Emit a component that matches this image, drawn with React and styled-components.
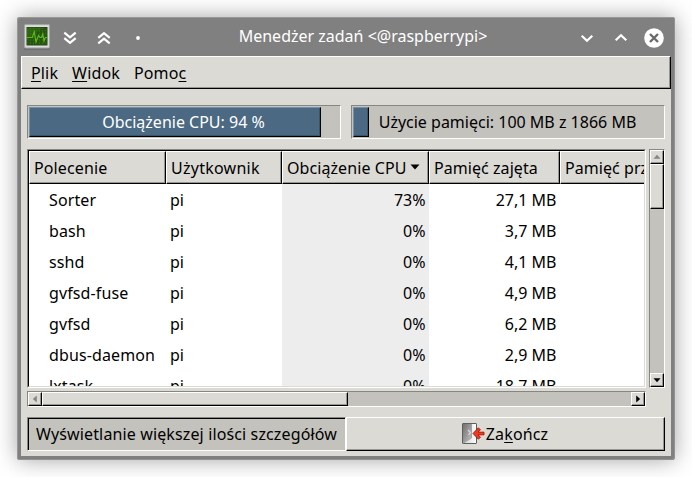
import React from "react";
import styled, { createGlobalStyle } from "styled-components";

const C = { face: "#dcdad5", trough: "#c4c2bd", blue: "#4b6983", frame: "#808080" };

const Global = createGlobalStyle`
  * { box-sizing: border-box; }
  html, body { margin: 0; padding: 0; background: #fff; overflow: hidden; }
  body { font: 16px/22px "Noto Sans", sans-serif; color: #000; white-space: nowrap; cursor: default; }
  svg { display: block; }
`;

const Page = styled.div`
  width: 692px;
  height: 477px;
  padding: 17px;
  overflow: hidden;
`;
const Window = styled.div`
  width: 658px;
  height: 443px;
  display: flex;
  flex-direction: column;
  background: ${C.frame};
  border-radius: 3px;
  padding: 0 4px 4px;
  box-shadow: inset 1px 1px 0 #989898, inset -1px -1px 0 #929292, 0 0 22px rgba(0, 0, 0, 0.36);
`;
const TitleBar = styled.header`
  height: 39px;
  flex: none;
  display: grid;
  grid-template-columns: 156px 1fr 124px;
  align-items: center;
  color: #fff;
`;
const Title = styled.div`
  text-align: center;
  padding: 0 0 2px 2px;
`;
const TitleLeft = styled.div`
  display: flex;
  align-items: center;
  padding-left: 2px;
`;
const DesktopKeys = styled.div`
  display: flex;
  align-items: center;
  gap: 20px;
  padding: 3px 0 0 12px;
`;
const PinKey = styled.div`
  padding: 2px 0 0 25px;
`;
const TitleRight = styled.div`
  display: flex;
  align-items: center;
  justify-content: flex-end;
  gap: 20px;
  padding: 3px 7px 0 0;
`;
const CloseKey = styled.div`
  margin-left: -4px;
`;
const Client = styled.main`
  flex: 1;
  min-height: 0;
  background: ${C.face};
  display: flex;
  flex-direction: column;
`;
const MenuBar = styled.nav`
  height: 33px;
  flex: none;
  display: flex;
  gap: 14px;
  align-items: center;
  padding: 0 0 0 9px;
  letter-spacing: 0.15px;
  border: solid;
  border-width: 1px;
  border-color: #fff #000 #000 #fff;
  box-shadow: inset -1px -1px 0 #969590;
`;
const Key = styled.span`
  text-decoration: underline;
  text-decoration-thickness: 1px;
  text-underline-offset: 2px;
  text-decoration-skip-ink: none;
`;
const Body = styled.div`
  padding: 16px 6px 6px;
  display: flex;
  flex-direction: column;
`;
const Meters = styled.div`
  display: grid;
  grid-template-columns: 314px 314px;
  gap: 10px;
  height: 34px;
`;
const Meter = styled.div`
  background: ${C.trough};
  border: 1px solid;
  border-color: #888680 #fff #fff #888680;
  padding: 1px;
  display: grid;
  align-items: stretch;
`;
const MeterFill = styled.div`
  grid-area: 1 / 1;
  width: ${(p) => p.$w}px;
  background: ${C.blue};
  border: 1px solid;
  border-color: #7590ae #000 #000 #7590ae;
  box-shadow: inset -1px -1px 0 #3a546b;
`;
const MeterLabel = styled.div`
  grid-area: 1 / 1;
  text-align: center;
  line-height: 30px;
  padding-right: 1px;
  color: ${(p) => (p.$light ? "#fff" : "#000")};
`;
const ListArea = styled.div`
  margin-top: 10px;
  display: grid;
  grid-template-columns: 619px 16px;
  grid-template-rows: 239px 16px;
  gap: 3px;
`;
const Table = styled.div`
  background: #fff;
  border: 1px solid;
  border-color: #888680 #fff #fff #888680;
  overflow: hidden;
`;
const TableInner = styled.div`
  height: 237px;
  border: 1px solid;
  border-color: #000 ${C.face} ${C.face} #000;
  overflow: hidden;
`;
const columns = "137px 116px 147px 131px 130px";
const HeaderRow = styled.div`
  display: grid;
  grid-template-columns: ${columns};
  height: 33px;
`;
const HeaderCell = styled.div`
  display: flex;
  align-items: center;
  gap: 4px;
  padding: 0 0 0 4px;
  letter-spacing: ${(p) => p.$track ?? 0.12}px;
  background: ${C.face};
  border: 1px solid;
  border-color: #fff #000 #000 #fff;
  box-shadow: inset -1px -1px 0 #969590;
  svg { margin-top: -2px; }
`;
const Row = styled.div`
  display: grid;
  grid-template-columns: ${columns};
  height: 31px;
  line-height: 33px;
`;
const Cell = styled.div`
  padding: 0 3.5px 0 ${(p) => (p.$name ? 20 : 4)}px;
  letter-spacing: ${(p) => (p.$name ? 0.12 : 0)}px;
  text-align: ${(p) => (p.$right ? "right" : "left")};
  background: ${(p) => (p.$sorted ? "#ededed" : "#fff")};
`;
const Scroll = styled.div`
  display: flex;
  flex-direction: ${(p) => (p.$vertical ? "column" : "row")};
  background: ${C.trough};
  border: 1px solid;
  border-color: #888680 #fff #fff #888680;
`;
const Raised = styled.div`
  background: ${C.face};
  border: 1px solid;
  border-color: #fff #000 #000 #fff;
  box-shadow: inset -1px -1px 0 #969590;
`;
const Arrow = styled(Raised)`
  width: 14px;
  height: 14px;
  flex: none;
  display: flex;
  align-items: center;
  justify-content: center;
`;
const Thumb = styled(Raised)`
  flex: 0 0 ${(p) => p.$size}px;
`;
const Spacer = styled.div`
  flex: 1;
`;
const Footer = styled.footer`
  margin-top: 10px;
  display: grid;
  grid-template-columns: 319px 319px;
  height: 33px;
`;
const PressedButton = styled.div`
  background: ${C.trough};
  border: 1px solid;
  border-color: #888680 #fff #fff #888680;
  box-shadow: inset 1px 1px 0 #000;
  line-height: 32px;
  letter-spacing: 0.13px;
  padding-left: 8px;
`;
const Button = styled(Raised)`
  display: flex;
  align-items: center;
  justify-content: center;
  gap: 1px;
  padding-right: 2px;
  line-height: 32px;
  letter-spacing: 0.15px;
`;

const MonitorIcon = () => (
  <svg width="28" height="28" viewBox="0 0 28 28">
    <rect x="1" y="2" width="26" height="25" rx="1.5" fill="#5d5d5d" opacity=".5" />
    <rect x="1.5" y="1.5" width="25" height="23.5" rx="1" fill="#d6d6d6" stroke="#a4a4a4" />
    <rect x="3" y="3.5" width="22" height="20" fill="#fff" opacity=".4" />
    <rect x="3.5" y="4" width="21" height="18.5" fill="#1d3a13" />
    <rect x="4" y="4.5" width="20" height="17.5" fill="#25560f" />
    <path d="M4 4.5H20L4 17Z" fill="#36700f" opacity=".6" />
    <path d="M4 7.5H24M4 10.5H24M4 16.5H24M4 19.5H24M7.5 5V22M10.5 5V22M16.5 5V22M19.5 5V22" stroke="#3c7d1b" strokeWidth="1" strokeDasharray="1 2" opacity=".6" />
    <path d="M4 14.5H9.3L11.3 9L13 19L15.5 12.5L17 14.5H18.5L19.8 11L21 18L22.3 14.5H24" fill="none" stroke="#62b51e" strokeWidth="1.2" />
  </svg>
);
const Chevrons = ({ up, double }) => (
  <svg width="14" height="14" viewBox="0 0 14 14" fill="none" stroke="#fff" strokeWidth="2.2">
    <g transform={up ? "rotate(180 7 7)" : undefined}>
      {double ? <path d="M1.3 1.7L7 6.4L12.7 1.7M1.3 7.2L7 11.9L12.7 7.2" /> : <path d="M1.7 4.7L7 9.7L12.3 4.7" />}
    </g>
  </svg>
);
const Dot = () => (
  <svg width="4" height="4"><circle cx="2" cy="2" r="1.9" fill="#fff" /></svg>
);
const CloseIcon = () => (
  <svg width="20" height="20" viewBox="0 0 20 20">
    <circle cx="10" cy="10" r="9.8" fill="#fff" />
    <path d="M6 6L14 14M14 6L6 14" stroke="#6a6a6a" strokeWidth="2.4" />
  </svg>
);
const Triangle = ({ dir, color = "#000" }) => {
  const angle = { down: 0, left: 90, up: 180, right: 270 }[dir];
  return (
    <svg width="8" height="8" viewBox="0 0 8 8">
      <path d="M.5 2.2H7.5L4 6.2Z" fill={color} transform={`rotate(${angle} 4 4)`} />
    </svg>
  );
};
const SortArrow = () => (
  <svg width="10" height="6"><path d="M.5 .5H9.5L5 5.5Z" fill="#000" /></svg>
);
const DoorIcon = () => (
  <svg width="24" height="24" viewBox="0 0 24 24">
    <defs>
      <linearGradient id="door" x1="0" y1="0" x2="1" y2="1">
        <stop offset="0" stopColor="#6f6f6f" /><stop offset="1" stopColor="#c4c4c4" />
      </linearGradient>
      <linearGradient id="light" x1="0" x2="1">
        <stop offset="0" stopColor="#ccc" /><stop offset="1" stopColor="#fff" />
      </linearGradient>
    </defs>
    <rect x="1.5" y="1.5" width="14" height="20" rx=".5" fill="url(#light)" stroke="#5d5f5c" />
    <path d="M2 2H10.5V16L2 21Z" fill="url(#door)" />
    <path d="M2.5 21L10.5 16V2" fill="none" stroke="#999" strokeWidth=".8" />
    <path d="M7 8L9.5 10.5L7.5 13" fill="none" stroke="#ddd" strokeWidth="1.2" />
    <path d="M12 11.5L17.4 5.8L19.4 7.8L17 10.2H23V12.8H17L19.4 15.2L17.4 17.2Z" fill="#ef3b22" stroke="#a51105" strokeWidth=".9" strokeLinejoin="round" />
  </svg>
);

const rows = [
  ["Sorter", "73%", "27,1 MB"],
  ["bash", "0%", "3,7 MB"],
  ["sshd", "0%", "4,1 MB"],
  ["gvfsd-fuse", "0%", "4,9 MB"],
  ["gvfsd", "0%", "6,2 MB"],
  ["dbus-daemon", "0%", "2,9 MB"],
  ["lxtask", "0%", "18,7 MB"],
];

export default function App() {
  return (
    <Page>
      <Global />
      <Window>
        <TitleBar>
          <TitleLeft>
            <MonitorIcon />
            <DesktopKeys><Chevrons double /><Chevrons double up /></DesktopKeys>
            <PinKey><Dot /></PinKey>
          </TitleLeft>
          <Title>Menedżer zadań &lt;@raspberrypi&gt;</Title>
          <TitleRight><Chevrons /><Chevrons up /><CloseKey><CloseIcon /></CloseKey></TitleRight>
        </TitleBar>
        <Client>
          <MenuBar>
            <div><Key>P</Key>lik</div>
            <div><Key>W</Key>idok</div>
            <div>Pomo<Key>c</Key></div>
          </MenuBar>
          <Body>
            <Meters>
              <Meter>
                <MeterFill $w={292} />
                <MeterLabel $light>Obciążenie CPU: 94 %</MeterLabel>
              </Meter>
              <Meter>
                <MeterFill $w={16} />
                <MeterLabel>Użycie pamięci: 100 MB z 1866 MB</MeterLabel>
              </Meter>
            </Meters>
            <ListArea>
              <Table>
                <TableInner>
                  <HeaderRow>
                    <HeaderCell>Polecenie</HeaderCell>
                    <HeaderCell $track={0.25}>Użytkownik</HeaderCell>
                    <HeaderCell $track={0.08}>Obciążenie CPU<SortArrow /></HeaderCell>
                    <HeaderCell $track={0.06}>Pamięć zajęta</HeaderCell>
                    <HeaderCell $track={0.06}>Pamięć przydzielona</HeaderCell>
                  </HeaderRow>
                  {rows.map(([name, cpu, mem]) => (
                    <Row key={name}>
                      <Cell $name>{name}</Cell>
                      <Cell>pi</Cell>
                      <Cell $right $sorted>{cpu}</Cell>
                      <Cell $right>{mem}</Cell>
                      <Cell />
                    </Row>
                  ))}
                </TableInner>
              </Table>
              <Scroll $vertical>
                <Arrow><Triangle dir="up" color="#888680" /></Arrow>
                <Thumb $size={45} />
                <Spacer />
                <Arrow><Triangle dir="down" /></Arrow>
              </Scroll>
              <Scroll>
                <Arrow><Triangle dir="left" color="#888680" /></Arrow>
                <Thumb $size={306} />
                <Spacer />
                <Arrow><Triangle dir="right" /></Arrow>
              </Scroll>
            </ListArea>
            <Footer>
              <PressedButton>Wyświetlanie większej ilości szczegółów</PressedButton>
              <Button><DoorIcon /><span>Za<Key>k</Key>ończ</span></Button>
            </Footer>
          </Body>
        </Client>
      </Window>
    </Page>
  );
}
